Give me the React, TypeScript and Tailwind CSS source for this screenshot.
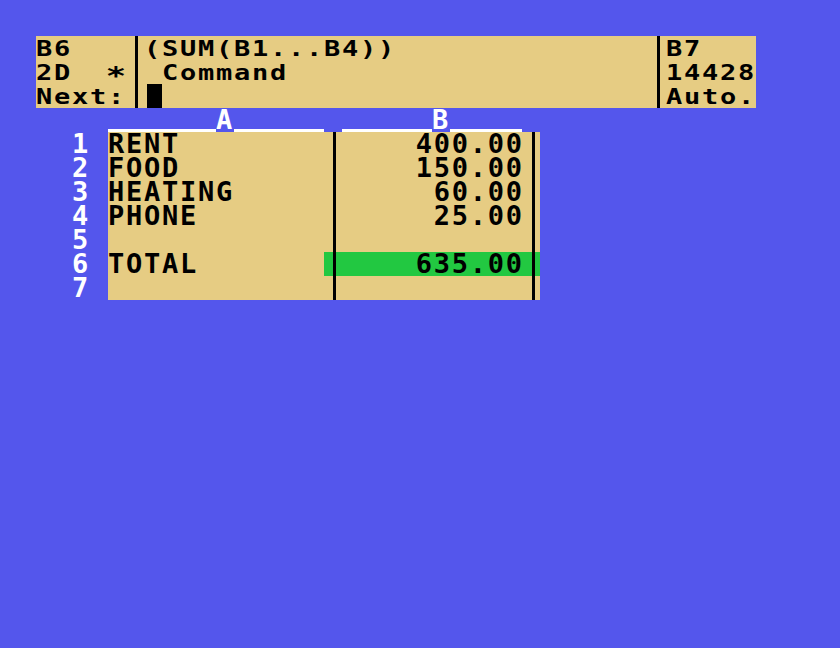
const rows = [
  { n: "1", label: "RENT", value: "400.00" },
  { n: "2", label: "FOOD", value: "150.00" },
  { n: "3", label: "HEATING", value: "60.00" },
  { n: "4", label: "PHONE", value: "25.00" },
  { n: "5", label: "", value: "" },
  { n: "6", label: "TOTAL", value: "635.00", active: true },
  { n: "7", label: "", value: "" },
]

function Line({ children }: { children?: React.ReactNode }) {
  return (
    <div className="h-[24px]">
      <span className="inline-block origin-[0_15.6px] scale-y-[0.76]">{children}</span>
    </div>
  )
}

function TopBar() {
  return (
    <div className="flex h-[72px] w-[720px] bg-[#e6cc83]">
      <div className="w-[102px] border-r-[3px] border-black">
        <Line>B6</Line>
        <Line>
          2D{"  "}
          <span className="inline-block translate-y-[4px] scale-125">*</span>
        </Line>
        <Line>Next:</Line>
      </div>
      <div className="w-[522px] border-r-[3px] border-black pl-[6px]">
        <Line>(SUM(B1...B4))</Line>
        <Line> Command</Line>
        <div className="ml-[3px] h-[24px] w-[15px] bg-black" />
      </div>
      <div className="flex-1 overflow-hidden pl-[6px]">
        <Line>B7</Line>
        <Line>14428</Line>
        <Line>Auto.</Line>
      </div>
    </div>
  )
}

function Divider({ offset }: { offset: string }) {
  return (
    <div className="w-[18px]">
      <div className={`h-full w-[3px] bg-black ${offset}`} />
    </div>
  )
}

function Sheet() {
  return (
    <div>
      {/* column headers */}
      <div className="flex h-[24px] text-white">
        <div className="w-[72px]" />
        <div className="flex w-[216px]">
          <div className="w-[108px] border-b-[3px] border-white" />
          <div className="w-[18px]">A</div>
          <div className="w-[90px] border-b-[3px] border-white" />
        </div>
        <div className="w-[18px]" />
        <div className="flex w-[180px]">
          <div className="w-[90px] border-b-[3px] border-white" />
          <div className="w-[18px]">B</div>
          <div className="w-[72px] border-b-[3px] border-white" />
        </div>
      </div>

      <div className="flex">
        <div className="ml-[36px] w-[36px] text-white">
          {rows.map((r) => (
            <div key={r.n} className="h-[24px]">
              {r.n}
            </div>
          ))}
        </div>
        <div className="w-[432px] bg-[#e6cc83]">
          {rows.map((r) => (
            <div key={r.n} className="flex h-[24px]">
              <div className="w-[216px]">{r.label}</div>
              <div className={`flex ${r.active ? "bg-[#22c841]" : ""}`}>
                <Divider offset="ml-[9px]" />
                <div className="w-[180px] text-right">
                  <span className="mr-[-1.74px]">{r.value}</span>
                </div>
                <Divider offset="ml-[10px]" />
              </div>
            </div>
          ))}
        </div>
      </div>
    </div>
  )
}

export default function App() {
  return (
    <div className="h-[648px] w-[840px] whitespace-pre bg-[#5456ec] pl-[36px] pt-[36px] font-['DejaVu_Sans_Mono',monospace] text-[27px] font-bold leading-[24px] tracking-[1.74px] text-black">
      <TopBar />
      <Sheet />
    </div>
  )
}
